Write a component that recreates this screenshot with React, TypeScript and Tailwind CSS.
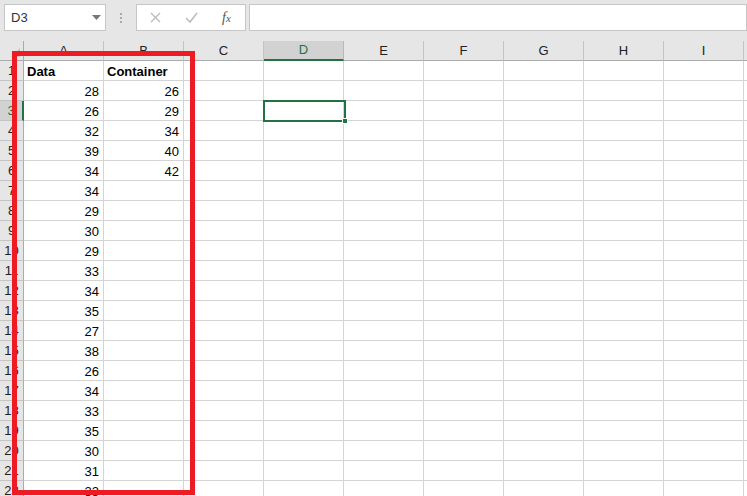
import React from "react";

const colA = [28, 26, 32, 39, 34, 34, 29, 30, 29, 33, 34, 35, 27, 38, 26, 34, 33, 35, 30, 31, 33];
const colB = [26, 29, 34, 40, 42];
const letters = ["A", "B", "C", "D", "E", "F", "G", "H", "I", ""];

export default function App() {
  const rows = Array.from({ length: 22 }, (_, i) => i + 1);

  return (
    <div className="relative w-[747px] h-[496px] overflow-hidden bg-white font-['Liberation_Sans',Arial,sans-serif] text-[13px] text-black">
      {/* Formula bar */}
      <div className="h-[41px] bg-[#e6e6e6] flex items-start pt-[4px] pl-[4px]">
        <div className="w-[102px] h-[27px] bg-white border border-[#c6c6c6] flex items-center justify-between pl-[6px] pr-[4px]">
          <span className="text-[#333]">D3</span>
          <svg width="9" height="5" viewBox="0 0 9 5"><path d="M0 0h9L4.5 5z" fill="#777" /></svg>
        </div>
        <div className="w-[30px] h-[27px] flex flex-col items-center justify-center gap-[2px]">
          <span className="w-[2px] h-[2px] bg-[#aaa]" />
          <span className="w-[2px] h-[2px] bg-[#aaa]" />
          <span className="w-[2px] h-[2px] bg-[#aaa]" />
        </div>
        <div className="w-[110px] h-[27px] bg-white border border-[#c6c6c6] flex items-center pl-[13px]">
          <svg width="11" height="11" viewBox="0 0 11 11"><path d="M1 1l9 9M10 1l-9 9" stroke="#bbb" strokeWidth="1.3" /></svg>
          <svg className="ml-[24px]" width="13" height="11" viewBox="0 0 13 11"><path d="M1 6l4 4 7-9" stroke="#bbb" strokeWidth="1.6" fill="none" /></svg>
          <span className="ml-[24px] italic font-['Liberation_Serif',serif] text-[14px] text-[#555]">f<span className="text-[11px]">x</span></span>
        </div>
        <div className="ml-[3px] flex-1 h-[27px] bg-white border border-[#c6c6c6]" />
      </div>

      {/* Grid */}
      <div className="grid grid-cols-[24px_repeat(10,80px)] auto-rows-[20px]">
        <div className="bg-[#e6e6e6] border-r border-b border-[#ababab] relative">
          <svg className="absolute right-[3px] bottom-[3px]" width="9" height="9" viewBox="0 0 9 9"><path d="M9 0v9H0z" fill="#c4c4c4" /></svg>
        </div>
        {letters.map((l, i) => (
          <div
            key={i}
            className={
              i === 3
                ? "bg-[#d2d2d2] border-r border-[#b8b8b8] border-b-2 border-b-[#217346] flex items-center justify-center text-[#217346]"
                : "bg-[#e6e6e6] border-r border-[#c4c4c4] border-b border-b-[#ababab] flex items-center justify-center text-[#222]"
            }
          >
            {l}
          </div>
        ))}
        {rows.map((r) => (
          <React.Fragment key={r}>
            <div
              className={
                r === 3
                  ? "bg-[#d2d2d2] border-r-2 border-r-[#217346] border-b border-[#c4c4c4] flex items-center justify-center text-[#217346]"
                  : "bg-[#e6e6e6] border-r border-r-[#ababab] border-b border-[#c4c4c4] flex items-center justify-center text-[#222]"
              }
            >
              {r}
            </div>
            <div className="border-r border-b border-[#d4d4d4] flex items-end justify-end pr-[4px] pb-[1px] leading-[14px]">
              {r === 1 ? <span className="mr-auto pl-[3px] font-bold">Data</span> : colA[r - 2]}
            </div>
            <div className="border-r border-b border-[#d4d4d4] flex items-end justify-end pr-[4px] pb-[1px] leading-[14px]">
              {r === 1 ? <span className="mr-auto pl-[3px] font-bold">Container</span> : colB[r - 2] ?? ""}
            </div>
            {Array.from({ length: 8 }, (_, c) => (
              <div key={c} className="border-r border-b border-[#d4d4d4]" />
            ))}
          </React.Fragment>
        ))}
      </div>

      {/* Active cell D3 */}
      <div className="absolute left-[263px] top-[100px] w-[83px] h-[22px] border-2 border-[#217346]">
        <div className="absolute right-[-4px] bottom-[-4px] w-[6px] h-[6px] bg-[#217346] border border-white" />
      </div>

      {/* Red highlight */}
      <div className="absolute left-[12px] top-[51px] w-[183px] h-[444px] border-[5px] border-[#ed1c24]" />
    </div>
  );
}
